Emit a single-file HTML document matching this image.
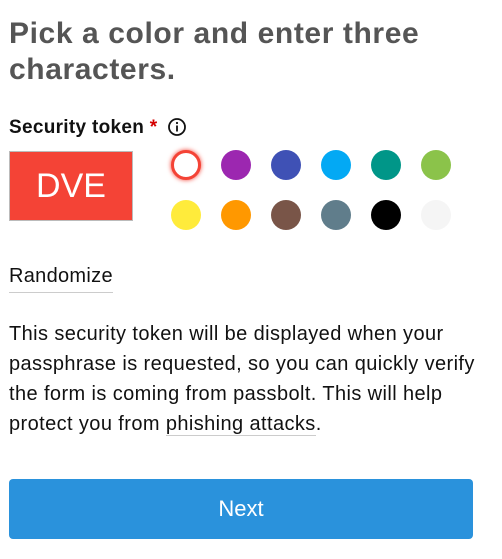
<!DOCTYPE html>
<html><head><style>
body{margin:0;width:502px;height:559px;background:#fff;font-family:"Liberation Sans",sans-serif;position:relative;overflow:hidden}
.a{position:absolute}
h1{position:absolute;left:9px;top:16px;margin:0;font-size:30px;line-height:36px;color:#555;font-weight:bold;letter-spacing:0.6px}
.c{position:absolute;width:30px;height:30px;border-radius:50%}
</style></head><body>
<h1>Pick a color and enter three<br>characters.</h1>
<div class="a" style="left:9px;top:117px;font-size:19px;font-weight:bold;color:#111;letter-spacing:0.3px">Security token <span style="color:#d40000">*</span></div>
<svg class="a" style="left:167px;top:117px" width="20" height="20" viewBox="0 0 20 20"><circle cx="10" cy="10" r="8" fill="none" stroke="#111" stroke-width="1.8"/><rect x="9.1" y="8.5" width="1.8" height="6" fill="#111"/><circle cx="10" cy="6" r="1.1" fill="#111"/></svg>
<div class="a" style="left:9px;top:151px;width:122px;height:68px;background:#f44336;border:1px solid #bbb;color:#fff;font-size:34px;line-height:68px;text-align:center">DVE</div>
<div class="c" style="left:171px;top:150px;width:24px;height:24px;border:3px solid #f44336;background:#fff;box-shadow:0 0 5px #f44336"></div>
<div class="c" style="left:221px;top:150px;background:#9c27b0"></div>
<div class="c" style="left:271px;top:150px;background:#3f51b5"></div>
<div class="c" style="left:321px;top:150px;background:#03a9f4"></div>
<div class="c" style="left:371px;top:150px;background:#009688"></div>
<div class="c" style="left:421px;top:150px;background:#8bc34a"></div>
<div class="c" style="left:171px;top:200px;background:#ffeb3b"></div>
<div class="c" style="left:221px;top:200px;background:#ff9800"></div>
<div class="c" style="left:271px;top:200px;background:#795548"></div>
<div class="c" style="left:321px;top:200px;background:#607d8b"></div>
<div class="c" style="left:371px;top:200px;background:#000"></div>
<div class="c" style="left:421px;top:200px;background:#f5f5f5"></div>
<div class="a" style="left:9px;top:265px;font-size:20px;color:#111;border-bottom:1px solid #ccc;padding-bottom:4px;letter-spacing:0.3px">Randomize</div>
<div class="a" style="left:9px;top:319px;width:470px;font-size:20px;line-height:30px;color:#111;letter-spacing:0.4px">This security token will be displayed when your passphrase is requested, so you can quickly verify the form is coming from passbolt. This will help protect you from <span style="border-bottom:1px solid #ccc">phishing attacks</span>.</div>
<div class="a" style="left:9px;top:479px;width:464px;height:60px;background:#2a92dc;border-radius:4px;color:#fff;font-size:22px;line-height:60px;text-align:center">Next</div>
</body></html>
